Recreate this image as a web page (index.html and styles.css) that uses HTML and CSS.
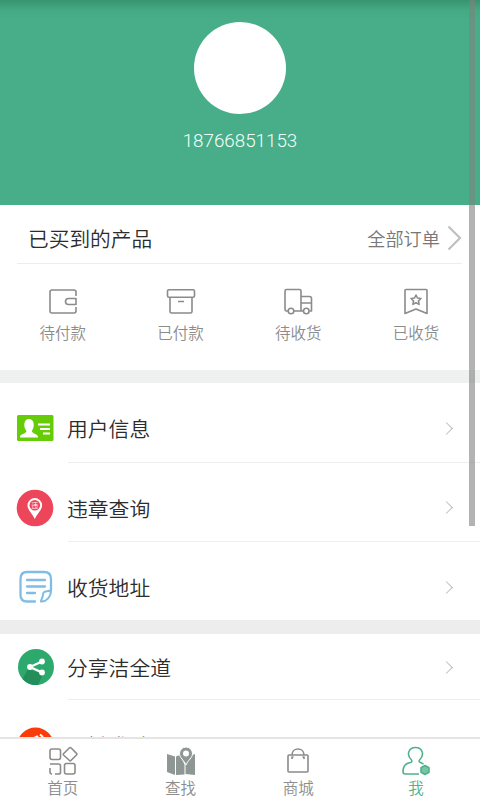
FILE: index.html
```html
<!DOCTYPE html>
<html lang="zh-CN">
<head>
<meta charset="utf-8">
<title>我</title>
<link rel="stylesheet" href="styles.css">
</head>
<body>
<div class="app">
  <main class="content">
    <header class="profile">
      <div class="avatar"></div>
      <div class="phone">18766851153</div>
    </header>
    <section class="orders">
      <div class="orders-head">
        <h1>已买到的产品</h1>
        <a class="all">全部订单<svg width="15" height="26" viewBox="0 0 15 26"><path d="M1.5 1.5 13 13 1.5 24.5" fill="none" stroke="#c0c0c0" stroke-width="2.2"/></svg></a>
      </div>
      <div class="statuses">
        <div class="status"><svg width="30" height="28" viewBox="0 0 30 28"><path d="M28 8V4Q28 2 26 2H4Q2 2 2 4V23Q2 25 4 25H26Q28 25 28 23V19M28 10.5H20.5Q17.5 10.5 17.5 13.5T20.5 16.5H28Z"/></svg><span>待付款</span></div>
        <div class="status"><svg width="30" height="28" viewBox="0 0 30 28"><rect x="1.5" y="1.8" width="27" height="7.5" rx="1.5"/><path d="M4 9.5V23.5Q4 25 5.5 25H24.5Q26 25 26 23.5V9.5M12 13.5H18"/></svg><span>已付款</span></div>
        <div class="status"><svg width="30" height="28" viewBox="0 0 30 28"><path d="M5 23H3.500Q2 23 2 21.500V3Q2 1.500 3.500 1.500H16.500Q18 1.500 18 3V23H11M18 8.500H26.500Q28.500 8.500 28.500 10.500V23H26.500M18 15H28M18 23H20"/><circle cx="8" cy="23" r="2.8"/><circle cx="23.3" cy="23" r="2.8"/></svg><span>待收货</span></div>
        <div class="status"><svg width="30" height="28" viewBox="0 0 30 28"><path d="M4 25.500V2.500Q4 1.500 5 1.500H25Q26 1.500 26 2.500V25.500L15 21Z"/><path d="m15 7 1.500 3 3.500.5-2.500 2.400.6 3.500-3.100-1.700-3.100 1.700.6-3.500-2.500-2.400 3.500-.5Z"/></svg><span>已收货</span></div>
      </div>
    </section>
    <section class="menu">
      <a class="row"><svg class="icon" width="38" height="38" viewBox="0 0 38 38"><rect x="1" y="6" width="36.500" height="26" rx="1.500" fill="#66cc08"/><path d="M4 28.500C4 24 10 25.500 10.500 22 7 18 7.500 10 13 10S19 18 15.800 22C16.500 25.500 22 24 22 28.500Z" fill="#fff"/><path d="M22 15.500H34M24 20H34M27 24.500H34" stroke="#fff" stroke-width="2"/></svg><span>用户信息</span></a>
      <a class="row"><svg class="icon" width="38" height="38" viewBox="0 0 38 38"><circle cx="19" cy="19" r="18.300" fill="#ed455a"/><path d="M18.800 30C16 24 11.500 21 11.500 16.300a7.300 7.300 0 0 1 14.600 0C26 21 21 25 18.800 30Z" fill="#fff"/><circle cx="18.800" cy="16.300" r="5.300" fill="#ed455a"/><text x="18.800" y="19.200" class="pin-label">违</text></svg><span>违章查询</span></a>
      <a class="row"><svg class="icon" width="38" height="38" viewBox="0 0 38 38"><path d="M19 33.500H11Q4.500 33.500 4.500 27V11Q4.500 4 11 4H28Q35 4 35 11V22M11 12H29M11 18.500H29M11 25H19" fill="none" stroke="#80bde5" stroke-width="2.300" stroke-linecap="round"/><path d="M35 22.500C30 23.500 27 23 27 26.500 27 30 24.500 32 25 33.500 30 34 35 29 35 22.500Z" fill="none" stroke="#80bde5" stroke-width="2"/></svg><span>收货地址</span></a>
    </section>
    <section class="menu menu-more">
      <a class="row"><svg class="icon" width="38" height="38" viewBox="0 0 38 38"><circle cx="20" cy="19" r="18" fill="#2da96e"/><path d="M12 21 27 26 22 36.900A18 18 0 0 1 6.500 31Z" fill="#238e5a"/><path d="M26 13.500 14 19 26 24.500" fill="none" stroke="#fff" stroke-width="2.200"/><circle cx="26" cy="13.500" r="2.900" fill="#fff"/><circle cx="14" cy="19" r="2.900" fill="#fff"/><circle cx="26" cy="24.500" r="2.900" fill="#fff"/></svg><span>分享洁全道</span></a>
      <a class="row"><svg class="icon" width="38" height="38" viewBox="0 0 38 38"><circle cx="19.500" cy="19" r="18.500" fill="#fa3d08"/><path d="M18 11 21 9.500 23 12M24 7.500 27 10" fill="none" stroke="#fff" stroke-width="2"/></svg><span>一键求助</span></a>
    </section>
  </main>
  <nav class="tabs">
    <a class="tab"><svg width="30" height="30" viewBox="0 0 30 30"><path d="M4 3H10.500Q12.500 3 12.500 5V11.500Q12.500 13.500 10.500 13.500H4Q2 13.500 2 11.500V5Q2 3 4 3ZM15.500 7.800 21.500 1.800Q22.200 1.200 22.900 1.800L28.500 7.400Q29.200 8.200 28.500 9L22.900 14.500Q22.200 15.200 21.500 14.500L15.500 9Q14.900 8.400 15.500 7.800ZM2 18H10.500Q12.500 18 12.500 20V26.500Q12.500 28 10.500 28H7M2 22V26Q2 28 4 28"/><rect x="16.500" y="17.500" width="10.500" height="10.500" rx="2"/></svg><span>首页</span></a>
    <a class="tab"><svg width="30" height="30" viewBox="0 0 30 30"><path class="solid" d="M1 8 9 10.500V29L1 26ZM10 10.500 14 9 18.500 18.500V28.500L10 29ZM24 10 29 8V29L19.500 28V18.500Z"/><path class="pin" d="M20 19C18 14 13.500 12 13.500 7.500a6.500 6.500 0 0 1 13 0C26.500 12 22 14 20 19Z"/><circle cx="20" cy="7.500" r="3" fill="#fff" stroke="none"/></svg><span>查找</span></a>
    <a class="tab"><svg width="30" height="30" viewBox="0 0 30 30"><rect x="5" y="9" width="20" height="17" rx="1"/><path d="M9 13V11H10.500M21 13V11H19.500M9 9C9 1 21 1 21 9"/></svg><span>商城</span></a>
    <a class="tab active"><svg width="30" height="30" viewBox="0 0 30 30"><path d="M18 28H4Q2 28 2 25.500C2 19.500 6 17 9.500 16.500Q11.500 16 10.500 14C5 9 7.500 1.500 14.500 1.500S24 9 18.500 14Q17.500 16 19.500 16.500L22.500 18"/><path class="badge" d="m24 19.500 4 2.200v4.600l-4 2.200-4-2.200v-4.600Z"/></svg><span>我</span></a>
  </nav>
  <div class="scrollbar"></div>
</div>
</body>
</html>
```
FILE: styles.css
```css
* { box-sizing: border-box; }
body { margin: 0; font-family: "Noto Sans CJK SC", sans-serif; font-weight: 350; color: #2c2c2c; background: #fff; }
.app { position: relative; height: 800px; display: flex; flex-direction: column; overflow: hidden; }
.content { flex: 1; min-height: 0; overflow: hidden; }
.profile { height: 205px; padding-top: 22px; display: flex; flex-direction: column; align-items: center; background: linear-gradient(#38946f 0, #43aa84 10px, #47ae89 20px); }
.avatar { width: 92px; height: 92px; border-radius: 50%; background: #fff; }
.phone { margin-top: 13px; font: 300 18.8px/28px Roboto, sans-serif; color: #f4fffa; }
.orders { height: 178px; border-bottom: 13px solid #eff1f1; }
.orders-head { height: 59px; margin: 0 18px 0 17px; padding: 7px 0 0 11px; display: flex; align-items: center; justify-content: space-between; border-bottom: 1px solid #ededed; }
h1 { margin: 0; font-size: 20.7px; font-weight: inherit; line-height: 30px; }
.all { display: flex; align-items: center; gap: 7px; font-size: 18.2px; line-height: 26px; color: #777; }
.statuses { display: flex; padding: 24px 5px 0 4px; }
.status { flex: 1; display: flex; flex-direction: column; align-items: center; font-size: 15.5px; line-height: 22px; color: #8c8c8c; }
.status svg { margin-bottom: 5px; }
.status svg, .tab svg { fill: none; stroke: #8b8b8b; stroke-width: 1.6; stroke-linejoin: round; }
.row { height: 79.5px; padding: 11px 28px 0 16px; display: grid; grid-template-columns: 38px 1fr 10px; column-gap: 13px; position: relative; font-size: 20.8px; line-height: 30px; align-items: center; }
.row::after { content: ""; width: 8px; height: 8px; border: solid #bdbdbd; border-width: 1.5px 1.5px 0 0; transform: rotate(45deg); }
.row::before { content: ""; position: absolute; left: 68px; right: 0; bottom: 0; height: 1px; background: #eee; }
.menu { height: 251px; overflow: hidden; border-bottom: 14px solid #ededed; }
.menu-more { height: 170px; border: 0; }
.menu-more .row { padding-top: 0; height: 66px; }
.menu-more .row + .row { height: 92px; }
.menu-more .row + .row span { padding-bottom: 2px; }
.pin-label { font-size: 7px; fill: #fff; text-anchor: middle; }
.tabs { height: 63px; padding: 7px 5px 0 4px; display: flex; border-top: 2px solid #e4e4e4; background: #fff; }
.tab { flex: 1; display: flex; flex-direction: column; align-items: center; font-size: 15.5px; line-height: 22px; color: #8a8e8c; }
.tab .solid { fill: #8f9794; stroke: none; }
.tab .pin { fill: #8f9794; stroke: #fff; stroke-width: 1; }
.tab.active { color: #50b18c; }
.tab.active svg { stroke: #50b18c; }
.active .badge { fill: #77c5a6; }
.scrollbar { position: absolute; top: 0; left: 469px; width: 6px; height: 526px; background: rgba(128,128,128,.6); }
```
